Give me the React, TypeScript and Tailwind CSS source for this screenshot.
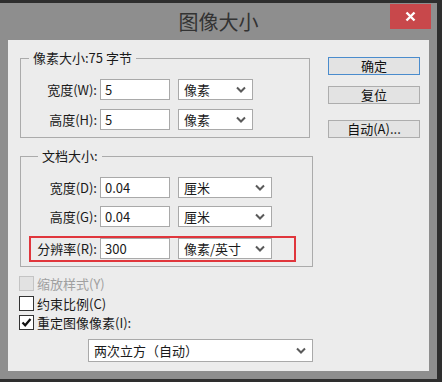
import React from 'react';

const font = { fontFamily: '"Noto Sans CJK SC", "Microsoft YaHei", sans-serif' };

function Chevron() {
  return (
    <svg width="10" height="7" viewBox="0 0 10 7" className="shrink-0">
      <polyline points="1,1.5 5,5.5 9,1.5" fill="none" stroke="#5a5a5a" strokeWidth="2" />
    </svg>
  );
}

function Select({ value, width }: { value: string; width: string }) {
  return (
    <div className={`${width} h-[21px] bg-white border border-[#a9a9a9] flex items-center justify-between pl-[5px] pr-[6px] text-[13px] text-[#1a1a1a]`}>
      <span>{value}</span>
      <Chevron />
    </div>
  );
}

function Row({ label, value, unit, selW, labelW = 'w-[76px]' }: { label: string; value: string; unit: string; selW: string; labelW?: string }) {
  return (
    <div className="flex items-center h-[21px]">
      <div className={`${labelW} text-right text-[13px] text-[#1a1a1a] leading-[21px]`}>{label}</div>
      <div className="ml-[3px] w-[70px] h-[21px] bg-white border border-[#a9a9a9] pl-[4px] text-[13px] leading-[19px] text-[#1a1a1a]">{value}</div>
      <div className="ml-[8px]">
        <Select value={unit} width={selW} />
      </div>
    </div>
  );
}

function Btn({ label, primary }: { label: string; primary?: boolean }) {
  return (
    <div className={`w-[92px] h-[18px] flex items-center justify-center text-[13px] text-[#111] bg-[#e3e3e3] border ${primary ? 'border-[#4a8ccd]' : 'border-[#adadad]'}`}>
      {label}
    </div>
  );
}

export default function App() {
  return (
    <div className="w-[442px] h-[382px] bg-[#2e2e2e] pt-[3px] overflow-hidden" style={font}>
      <div className="w-[437px] h-[376px] bg-[#8e8e8e] flex flex-col">
        {/* title bar */}
        <div className="h-[37px] flex items-start relative">
          <div className="absolute inset-0 flex items-center justify-center text-[20px] text-[#333]">图像大小</div>
          <div className="ml-auto mr-[6px] mt-[1px] w-[41px] h-[25px] bg-[#c8484b] flex items-center justify-center relative">
            <svg width="11" height="11" viewBox="0 0 11 11">
              <path d="M1.5 1.5 L9.5 9.5 M9.5 1.5 L1.5 9.5" stroke="#fff" strokeWidth="2.4" />
            </svg>
          </div>
        </div>

        {/* client area */}
        <div className="mx-[8px] w-[421px] h-[331px] bg-[#ececec] flex pl-[12px] pt-[9px]">
          <div className="w-[292px] flex flex-col">
            <fieldset className="w-[290px] border border-[#ababab] pb-[7px]">
              <legend className="ml-[8px] px-[4px] text-[13px] leading-[18px] text-[#1a1a1a]">像素大小:75 字节</legend>
              <div className="mt-[12px] flex flex-col gap-[9px]">
                <Row label="宽度(W):" value="5" unit="像素" selW="w-[75px]" />
                <Row label="高度(H):" value="5" unit="像素" selW="w-[75px]" />
              </div>
            </fieldset>

            <fieldset className="mt-[9px] w-[293px] border border-[#ababab] pb-[7px]">
              <legend className="ml-[17px] px-[4px] text-[13px] leading-[18px] text-[#1a1a1a]">文档大小:</legend>
              <div className="mt-[12px] flex flex-col">
                <Row label="宽度(D):" value="0.04" unit="厘米" selW="w-[94px]" />
                <div className="mt-[8px]">
                  <Row label="高度(G):" value="0.04" unit="厘米" selW="w-[94px]" />
                </div>
                <div className="mt-[11px] relative">
                  <Row label="分辨率(R):" value="300" unit="像素/英寸" selW="w-[94px]" />
                  <div className="absolute left-[8px] top-[-2px] w-[267px] h-[26px] border-2 border-[#e0363c] pointer-events-none" />
                </div>
              </div>
            </fieldset>

            <div className="mt-[9px] -ml-[1px] flex flex-col text-[13px] leading-[15px]">
              <div className="flex items-center h-[15px]">
                <div className="w-[15px] h-[15px] bg-[#e2e2e2] border border-[#c4c4c4]" />
                <span className="ml-[3px] text-[#a0a0a0]">缩放样式(Y)</span>
              </div>
              <div className="mt-[5px] flex items-center h-[15px]">
                <div className="w-[15px] h-[15px] bg-white border border-[#333]" />
                <span className="ml-[3px] text-[#1a1a1a]">约束比例(C)</span>
              </div>
              <div className="mt-[4px] flex items-center h-[15px]">
                <div className="w-[15px] h-[15px] bg-white border border-[#333] flex items-center justify-center">
                  <svg width="11" height="11" viewBox="0 0 11 11">
                    <polyline points="1.5,5.5 4.2,8.3 9.5,2" fill="none" stroke="#111" strokeWidth="2.2" />
                  </svg>
                </div>
                <span className="ml-[3px] text-[#1a1a1a]">重定图像像素(I):</span>
              </div>
            </div>

            <div className="mt-[9px] ml-[68px] w-[225px] h-[23px] bg-white border border-[#a9a9a9] flex items-center justify-between pl-[5px] pr-[6px] text-[13px] text-[#1a1a1a]">
              <span>两次立方（自动）</span>
              <Chevron />
            </div>
          </div>

          <div className="ml-[16px] mt-[8px] flex flex-col">
            <Btn label="确定" primary />
            <div className="mt-[11px]">
              <Btn label="复位" />
            </div>
            <div className="mt-[16px]">
              <Btn label="自动(A)..." />
            </div>
          </div>
        </div>
      </div>
    </div>
  );
}
